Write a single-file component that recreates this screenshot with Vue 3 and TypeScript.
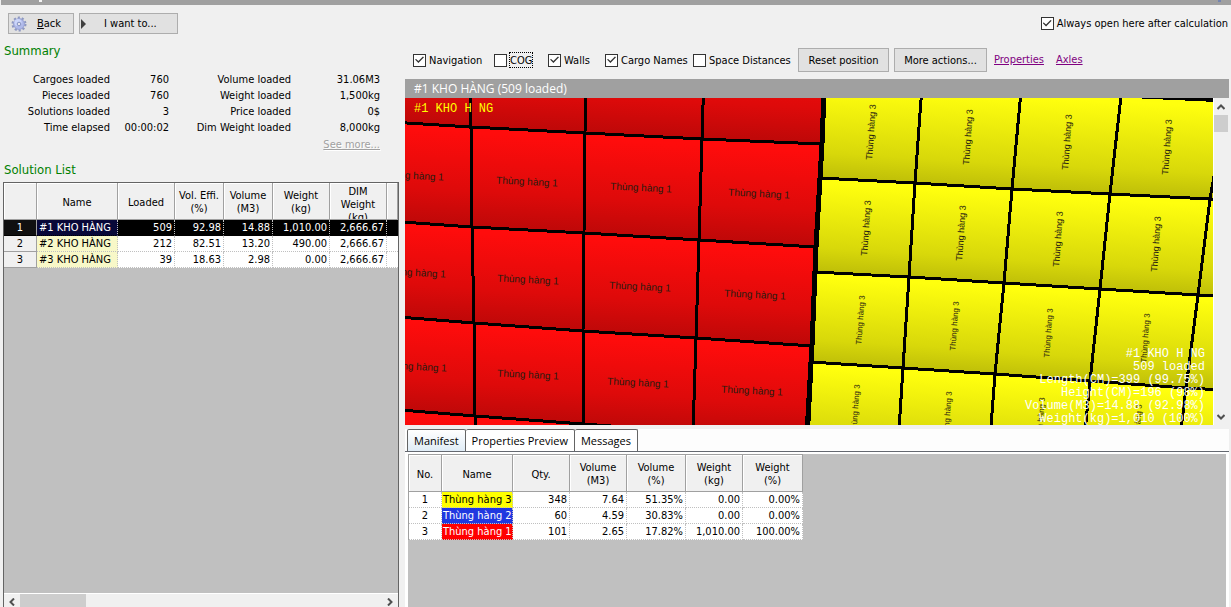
<script setup lang="ts">
import { ref } from 'vue'

type Point = [number, number]

interface Label {
  x: number
  y: number
  angle: number
  size: number
  text: string
}

interface Option {
  id: string
  label: string
  width: string
}

const options: Option[] = [
  { id: 'navigation', label: 'Navigation', width: 'w-navigation' },
  { id: 'cog', label: 'COG', width: 'w-cog' },
  { id: 'walls', label: 'Walls', width: 'w-walls' },
  { id: 'names', label: 'Cargo Names', width: 'w-names' },
  { id: 'distances', label: 'Space Distances', width: 'w-distances' },
]
const enabled = ref<string[]>(['navigation', 'walls', 'names'])
const alwaysOpen = ref(true)
const activeTab = ref('Manifest')
const tabs = ['Manifest', 'Properties Preview', 'Messages']

const summary = [
  ['Cargoes loaded', '760', 'Volume loaded', '31.06M3'],
  ['Pieces loaded', '760', 'Weight loaded', '1,500kg'],
  ['Solutions loaded', '3', 'Price loaded', '0$'],
  ['Time elapsed', '00:00:02', 'Dim Weight loaded', '8,000kg'],
]

const solutionHeads = ['', 'Name', 'Loaded', 'Vol. Effi.\n(%)', 'Volume\n(M3)', 'Weight\n(kg)', 'DIM\nWeight\n(kg)', '']
const solutions = [
  ['#1 KHO HÀNG', '509', '92.98', '14.88', '1,010.00', '2,666.67'],
  ['#2 KHO HÀNG', '212', '82.51', '13.20', '490.00', '2,666.67'],
  ['#3 KHO HÀNG', '39', '18.63', '2.98', '0.00', '2,666.67'],
]
const selected = ref(0)

const manifestHeads = ['No.', 'Name', 'Qty.', 'Volume\n(M3)', 'Volume\n(%)', 'Weight\n(kg)', 'Weight\n(%)']
const manifest = [
  { name: 'Thùng hàng 3', tone: 'yellow', values: ['348', '7.64', '51.35%', '0.00', '0.00%'] },
  { name: 'Thùng hàng 2', tone: 'blue', values: ['60', '4.59', '30.83%', '0.00', '0.00%'] },
  { name: 'Thùng hàng 1', tone: 'red', values: ['101', '2.65', '17.82%', '1,010.00', '100.00%'] },
]

// Corner points of the box faces, one array per horizontal edge.
const redNodes: Point[][] = [
  [[-50, -78], [64, -71], [181, -66], [300, -60], [421, -55]],
  [[-47, 22], [66, 29], [180, 35], [297, 41], [417, 46]],
  [[-46, 121], [67, 129], [179, 135], [294, 142], [411, 149]],
  [[-44, 216], [69, 225], [178, 233], [291, 240], [407, 248]],
  [[-42, 309], [70, 318], [178, 326], [288, 334], [402, 342]],
  [[-40, 395], [71, 408], [177, 416], [285, 424], [398, 432]],
]
const yellowNodes: Point[][] = [
  [[419, -17], [517, -12], [616, -7], [716, -2], [822, 3], [920, 8]],
  [[415, 80], [510, 85], [607, 91], [705, 96], [805, 101], [900, 107]],
  [[410, 174], [504, 179], [599, 185], [695, 191], [793, 197], [890, 203]],
  [[405, 264], [498, 270], [590, 276], [685, 283], [781, 290], [876, 295]],
  [[400, 355], [492, 362], [583, 368], [676, 375], [770, 382], [864, 388]],
]

function faces(nodes: Point[][]): string[] {
  const out: string[] = []
  for (let r = 0; r < nodes.length - 1; r++) {
    for (let c = 0; c < nodes[r].length - 1; c++) {
      out.push([nodes[r][c], nodes[r][c + 1], nodes[r + 1][c + 1], nodes[r + 1][c]].map(p => p.join(',')).join(' '))
    }
  }
  return out
}
const redFaces = faces(redNodes)
const yellowFaces = faces(yellowNodes)
const seam = redNodes.map(row => row[4].join(',')).join(' ')

function labels(points: Point[][], angle: number, sizes: number[], text: string): Label[] {
  return points.flatMap((row, i) => row.map(([x, y]) => ({ x, y, angle, size: sizes[i], text })))
}
const redLabels = labels(
  [
    [[8, 78], [122, 84], [236, 90], [354, 96]],
    [[10, 175], [123, 182], [235, 189], [350, 197]],
    [[11, 269], [123, 277], [233, 285], [347, 293]],
  ],
  3, [10, 10, 10], 'Thùng hàng 1',
)
const yellowLabels = labels(
  [
    [[466, 34], [563, 39], [662, 44], [762, 49]],
    [[461, 130], [556, 135], [653, 141], [751, 146]],
    [[455, 222], [549, 228], [643, 235], [740, 240]],
    [[450, 311], [542, 318], [635, 324], [732, 331]],
  ],
  -86, [9, 9, 8, 8], 'Thùng hàng 3',
)

const stats = [
  '#1 KHO H NG',
  '509 loaded',
  'Length(CM)=399 (99.75%)',
  'Height(CM)=196 (98%)',
  'Volume(M3)=14.88 (92.98%)',
  'Weight(kg)=1,010 (100%)',
]
</script>

<template>
  <div class="window">
    <div class="titlebar"><i class="mark light"></i><i class="mark cool"></i></div>
    <div class="columns">
      <aside class="left">
        <div class="actions">
          <button type="button" class="btn back">
            <svg class="gear" viewBox="0 0 16 16" width="16" height="16" aria-hidden="true">
              <circle cx="8" cy="8" r="6" fill="none" stroke="#8e98c0" stroke-width="3" stroke-dasharray="2 1.77" />
              <circle cx="8" cy="8" r="5.4" fill="#b0baea" stroke="#98a2d2" stroke-width="1" />
              <circle cx="7" cy="6.5" r="3.6" fill="#ccd6fa" />
              <circle cx="8" cy="8" r="1.8" fill="#e6e6ee" stroke="#8490c0" stroke-width="1" />
            </svg>
            <span><u>B</u>ack</span>
          </button>
          <button type="button" class="btn want">
            <svg class="arrow" viewBox="0 0 6 10" width="6" height="10" aria-hidden="true"><path d="M0 0 5 5 0 10Z" fill="#404040" /></svg>
            <span>I want to...</span>
          </button>
        </div>
        <h2>Summary</h2>
        <table class="summary">
          <tbody>
            <tr v-for="row in summary" :key="row[0]">
              <th scope="row">{{ row[0] }}</th>
              <td class="first">{{ row[1] }}</td>
              <th scope="row" class="second">{{ row[2] }}</th>
              <td>{{ row[3] }}</td>
            </tr>
          </tbody>
        </table>
        <a href="#" class="more">See more...</a>
        <h2>Solution List</h2>
        <div class="list">
          <table class="grid solutions">
            <colgroup>
              <col class="c33"><col class="c81"><col class="c57"><col class="c49"><col class="c49"><col class="c57"><col class="c57"><col>
            </colgroup>
            <thead>
              <tr>
                <th v-for="(head, i) in solutionHeads" :key="i" scope="col"><div class="head">{{ head }}</div></th>
              </tr>
            </thead>
            <tbody>
              <tr v-for="(row, i) in solutions" :key="row[0]" :class="{ selected: selected === i }" @click="selected = i">
                <th scope="row">{{ i + 1 }}</th>
                <td v-for="(cell, j) in row" :key="j" :class="{ name: j === 0 }">{{ cell }}</td>
                <td class="rest"></td>
              </tr>
            </tbody>
          </table>
          <div class="hscroll">
            <button type="button" aria-label="Scroll left"><svg viewBox="0 0 6 8" width="6" height="8"><path d="M5 0.5 1.5 4 5 7.5" /></svg></button>
            <div class="hthumb"></div>
            <button type="button" aria-label="Scroll right"><svg viewBox="0 0 6 8" width="6" height="8"><path d="M1 0.5 4.5 4 1 7.5" /></svg></button>
          </div>
        </div>
      </aside>

      <main class="right">
        <div class="always">
          <label class="check"><input v-model="alwaysOpen" type="checkbox"><span>Always open here after calculation</span></label>
        </div>
        <div class="tools">
          <label v-for="o in options" :key="o.id" class="check" :class="o.width">
            <input v-model="enabled" type="checkbox" :value="o.id"><span :class="{ focus: o.id === 'cog' }">{{ o.label }}</span>
          </label>
          <button type="button" class="btn reset">Reset position</button>
          <button type="button" class="btn moreactions">More actions...</button>
          <a href="#" class="link">Properties</a>
          <a href="#" class="link axles">Axles</a>
        </div>
        <div class="caption">#1 KHO HÀNG (509 loaded)</div>
        <div class="viewer">
          <div class="scene">
            <svg class="boxes" viewBox="0 0 808 327">
              <defs>
                <linearGradient id="red" x1="0" y1="0" x2="-0.06" y2="1">
                  <stop offset="0.05" stop-color="#ff0c0c" />
                  <stop offset="0.6" stop-color="#de0a0a" />
                  <stop offset="0.95" stop-color="#bc0808" />
                </linearGradient>
                <linearGradient id="yellow" x1="0" y1="0" x2="-0.06" y2="1">
                  <stop offset="0.05" stop-color="#ffff0e" />
                  <stop offset="0.7" stop-color="#d8d80a" />
                  <stop offset="0.95" stop-color="#bebe08" />
                </linearGradient>
              </defs>
              <g stroke="#000" stroke-width="3" shape-rendering="crispEdges">
                <polygon v-for="p in redFaces" :key="p" :points="p" fill="url(#red)" />
                <polygon v-for="p in yellowFaces" :key="p" :points="p" fill="url(#yellow)" />
                <polyline :points="seam" fill="none" stroke-width="5" />
              </g>
              <g class="names">
                <text
                  v-for="(l, i) in [...redLabels, ...yellowLabels]" :key="i"
                  :transform="`translate(${l.x} ${l.y}) rotate(${l.angle})`" :font-size="l.size" y="3"
                >{{ l.text }}</text>
              </g>
            </svg>
            <div class="scene-title">#1 KHO H NG</div>
            <div class="stats"><div v-for="s in stats" :key="s">{{ s }}</div></div>
          </div>
          <div class="vscroll">
            <button type="button" aria-label="Scroll up"><svg viewBox="0 0 8 6" width="8" height="6"><path d="M0.5 5 4 1.5 7.5 5" /></svg></button>
            <div class="vthumb"></div>
            <button type="button" aria-label="Scroll down"><svg viewBox="0 0 8 6" width="8" height="6"><path d="M0.5 1 4 4.5 7.5 1" /></svg></button>
          </div>
        </div>
        <div class="tabs" role="tablist">
          <button
            v-for="t in tabs" :key="t" type="button" role="tab" class="tab"
            :class="{ active: t === activeTab }" :aria-selected="t === activeTab" @click="activeTab = t"
          >{{ t }}</button>
        </div>
        <div class="sheet">
          <table class="grid manifest">
            <colgroup>
              <col class="c33"><col class="c71"><col class="c57"><col class="c57"><col class="c59"><col class="c57"><col class="c60">
            </colgroup>
            <thead>
              <tr><th v-for="(head, i) in manifestHeads" :key="i" scope="col"><div class="head">{{ head }}</div></th></tr>
            </thead>
            <tbody>
              <tr v-for="(row, i) in manifest" :key="row.name">
                <td class="no">{{ i + 1 }}</td>
                <td class="item" :class="row.tone">{{ row.name }}</td>
                <td v-for="(v, j) in row.values" :key="j">{{ v }}</td>
              </tr>
            </tbody>
          </table>
        </div>
      </main>
    </div>
  </div>
</template>

<style>
body { background: #f0f0f0; }
</style>

<style scoped>
* { box-sizing: border-box; }
.window {
  display: flex;
  flex-direction: column;
  height: 100vh;
  overflow: hidden;
  background: #f0f0f0;
  color: #000;
  font: 11px/16px "DejaVu Sans Condensed", "DejaVu Sans", sans-serif;
}
button, input { font: inherit; color: inherit; margin: 0; }
.titlebar {
  display: flex;
  justify-content: space-between;
  flex: none;
  height: 5px;
  margin-left: 1px;
  padding: 0 10px 0 38px;
  background: #a0a0a0;
}
.mark { width: 3px; height: 2px; }
.light { background: #f4f4f4; }
.cool { background: #7484b0; }
.columns { display: flex; flex: 1; min-height: 0; }
.left { display: flex; flex-direction: column; flex: none; width: 405px; padding: 8px 6px 0 3px; }
.actions { display: flex; gap: 5px; padding-left: 5px; }
.btn {
  display: flex;
  align-items: center;
  justify-content: center;
  height: 24px;
  padding: 1px 0 0;
  border: 1px solid #adadad;
  background: #e1e1e1;
  white-space: nowrap;
}
.actions .btn { justify-content: flex-start; height: 21px; }
.actions .back { width: 66px; padding-left: 2px; gap: 10px; }
.actions .want { width: 99px; padding-left: 1px; gap: 17px; }
.btn svg { flex: none; }
h2 {
  margin: 9px 0 0 1px;
  color: #008000;
  font-size: 13px;
  font-weight: 400;
  line-height: 16px;
}
.summary { width: 377px; margin-top: 13px; border-collapse: collapse; table-layout: fixed; }
.summary th, .summary td { padding: 0; text-align: right; font-weight: 400; white-space: nowrap; }
.summary th { width: 107px; }
.summary .first { width: 59px; }
.summary .second { width: 122px; }
.more {
  align-self: flex-end;
  margin: 1px 19px 0 0;
  color: #a0a0a0;
  text-shadow: 1px 1px #fff;
}
.list {
  display: flex;
  flex-direction: column;
  flex: 1;
  min-height: 0;
  margin-top: 4px;
  border: 1px solid #646464;
  border-bottom: 0;
  background: #c0c0c0;
}
.grid { border-collapse: separate; border-spacing: 0; table-layout: fixed; background: #fff; }
.solutions { width: 100%; }
.c33 { width: 33px; }
.c49 { width: 49px; }
.c57 { width: 57px; }
.c59 { width: 59px; }
.c60 { width: 60px; }
.c71 { width: 71px; }
.c81 { width: 81px; }
.grid th { padding: 0; font-weight: 400; background: #f0f0f0; text-align: center; }
.grid thead th { border-right: 1px solid #a0a0a0; border-bottom: 1px solid #a0a0a0; box-shadow: inset 1px 1px #fff; }
.head {
  display: flex;
  align-items: safe center;
  justify-content: center;
  height: 36px;
  padding-top: 2px;
  overflow: hidden;
  line-height: 13px;
  white-space: pre;
}
.grid tbody th {
  height: 16px;
  padding-top: 1px;
  border-right: 1px solid #a0a0a0;
  border-bottom: 1px solid #a0a0a0;
  line-height: 14px;
}
.grid td {
  height: 16px;
  padding: 1px 2px 0;
  overflow: hidden;
  border-right: 1px dotted #c0c0c0;
  border-bottom: 1px dotted #c0c0c0;
  line-height: 14px;
  text-align: right;
  white-space: nowrap;
}
.grid td.rest { border-right: 0; }
.grid td.name { background: #f8f8c8; text-align: left; }
.grid .selected th, .grid .selected td { background: #000; color: #fff; border-bottom-color: #000; }
.grid .selected th { background: #101010; }
.grid .selected td.name { background: #080838; }
.grid td.no { text-align: center; }
.grid td.item { padding: 1px 1px 0; text-align: left; }
.grid .yellow { background: #ff0; }
.grid .blue { background: #2038e0; color: #fff; }
.grid .red { background: #f00; color: #fff; }
.hscroll { display: flex; align-items: center; height: 14px; margin-top: auto; border-top: 1px solid #fff; background: #f0f0f0; }
.hscroll button, .vscroll button { display: flex; align-items: center; justify-content: center; flex: none; padding: 0; border: 0; background: none; }
.hscroll button { width: 16px; height: 13px; padding-top: 2px; }
.hscroll button:last-child { margin-left: auto; }
.hscroll path, .vscroll path { fill: none; stroke: #505050; stroke-width: 2; }
.hthumb { width: 66px; height: 13px; background: #cdcdcd; }

.right { display: flex; flex-direction: column; flex: 1; min-width: 0; padding: 10px 2px 0 0; }
.always { display: flex; justify-content: flex-end; padding-right: 1px; }
.check { display: flex; align-items: center; gap: 3px; white-space: nowrap; }
.check span { padding-top: 1px; }
.check input {
  display: grid;
  place-items: center;
  flex: none;
  width: 13px;
  height: 13px;
  appearance: none;
  border: 1px solid #333;
  background: #fff;
}
.check input:checked::after {
  content: "";
  width: 9px;
  height: 8px;
  background: #333;
  clip-path: polygon(0 45%, 12% 36%, 38% 64%, 88% 5%, 100% 16%, 38% 88%);
}
.focus { outline: 1px dotted #000; line-height: 13px; }
.tools { display: flex; align-items: center; height: 24px; margin-top: 16px; padding-left: 8px; }
.w-navigation { width: 81px; }
.w-cog { width: 54px; }
.w-walls { width: 57px; }
.w-names { width: 88px; }
.w-distances { width: 105px; }
.reset { width: 91px; margin-right: 5px; }
.moreactions { width: 93px; }
.link { margin-left: 7px; color: #800080; }
.axles { margin-left: 12px; }
.caption {
  height: 19px;
  margin-top: 7px;
  padding-left: 9px;
  background: #a0a0a0;
  color: #fff;
  font: 12px/20px "Open Sans", "Noto Sans", sans-serif;
}
.viewer { display: flex; }
.scene { position: relative; flex: 1; min-width: 0; overflow: hidden; }
.boxes { display: block; width: 100%; height: auto; background: #000; }
.names { fill: #281c10; font-family: "Liberation Sans", Arial, sans-serif; text-anchor: middle; }
.scene-title, .stats { position: absolute; font: 12px/13px "Liberation Mono", monospace; white-space: pre; }
.scene-title { top: 5px; left: 9px; color: #ff0; }
.stats { right: 8px; bottom: -1px; color: #fff; text-align: right; }
.vscroll { display: flex; flex-direction: column; width: 16px; padding-right: 1px; border-left: 1px solid #fff; }
.vscroll button { height: 17px; }
.vscroll button:last-child { margin-top: auto; }
.vthumb { height: 17px; background: #cdcdcd; }
.tabs {
  display: flex;
  align-items: flex-end;
  height: 23px;
  margin-top: 4px;
  padding-left: 2px;
  border-bottom: 1px solid #646870;
  background: #fdfdfd;
}
.tab {
  height: 22px;
  padding: 0 6px;
  border: 1px solid #646464;
  border-bottom: 0;
  border-left-width: 0;
  border-radius: 2px 2px 0 0;
  background: #fff;
  font: 11px/20px "Open Sans", "Noto Sans", sans-serif;
}
.tab.active { border-left-width: 1px; background: linear-gradient(#fff, #e0ecf6); }
.sheet {
  flex: 1;
  min-height: 0;
  background: #c0c0c0;
  border: solid #fff;
  border-width: 2px 3px 0;
}
.manifest { width: 395px; border: 1px solid #a0a0a0; border-width: 1px 0 0 1px; }
</style>
